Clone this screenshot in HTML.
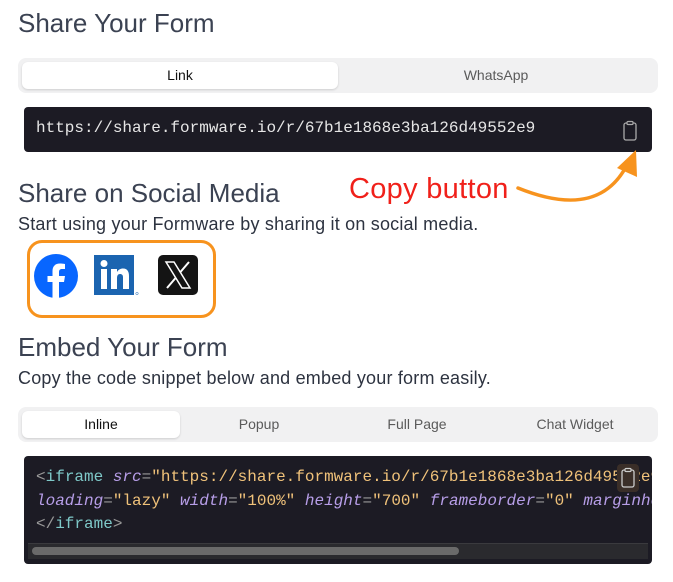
<!DOCTYPE html>
<html><head><style>
*{margin:0;padding:0;box-sizing:border-box}
body{width:673px;height:582px;background:#fff;font-family:"Liberation Sans",sans-serif;position:relative;overflow:hidden;color:#1f2937}
.abs{position:absolute}
h1{position:absolute;font-weight:300;font-size:26px;color:#3b4252;letter-spacing:0;white-space:nowrap}
.sub{position:absolute;font-size:18px;color:#2d3340;white-space:nowrap;letter-spacing:0.2px}
.tabs{position:absolute;left:18px;width:640px;height:35px;background:#f1f1f2;border-radius:8px}
.tab{position:absolute;top:4px;height:27px;line-height:27px;text-align:center;font-size:14px;color:#5a5a5a}
.tab.on{background:#fff;border-radius:6px;box-shadow:0 1px 2px rgba(0,0,0,.15);color:#111}
.dark{position:absolute;left:24px;width:628px;background:#1c1b24;border-radius:4px;font-family:"Liberation Mono",monospace;font-size:16px;color:#e6e6e6;overflow:hidden}
.k{color:#7ec8c8}.a{color:#b79ee8;font-style:italic}.s{color:#f0c27a}.p{color:#999}
</style></head><body>
<h1 style="left:18px;top:8px">Share Your Form</h1>
<div class="tabs" style="top:58px">
<div class="tab on" style="left:4px;width:316px">Link</div>
<div class="tab" style="left:320px;width:316px">WhatsApp</div>
</div>
<div class="dark" style="top:107px;height:45px">
<div class="abs" style="left:12px;top:12px;white-space:nowrap">https://share.formware.io/r/67b1e1868e3ba126d49552e9</div>
<svg class="abs" style="left:598px;top:13px" width="16" height="22" viewBox="0 0 16 22"><rect x="2" y="3" width="12" height="17" rx="2" fill="none" stroke="#aaa" stroke-width="1.3"/><rect x="5" y="1.5" width="6" height="3" rx="1" fill="#1c1b24" stroke="#aaa" stroke-width="1.2"/></svg>
</div>
<div class="abs" style="left:349px;top:173px;font-size:29px;color:#f0201a;white-space:nowrap;letter-spacing:0.3px">Copy button</div>
<svg class="abs" style="left:0;top:0" width="673" height="582"><path d="M518 188 C560 205 605 210 628 163" fill="none" stroke="#f7931e" stroke-width="3.5" stroke-linecap="round"/><path d="M617 168 L636 150 L637 177 Z" fill="#f7931e"/></svg>
<h1 style="left:18px;top:178px">Share on Social Media</h1>
<div class="sub" style="left:18px;top:214px">Start using your Formware by sharing it on social media.</div>
<div class="abs" style="left:27px;top:240px;width:189px;height:78px;border:3px solid #f7931e;border-radius:15px"></div>
<svg class="abs" style="left:34px;top:254px" width="44" height="44" viewBox="0 0 44 44"><circle cx="22" cy="22" r="22" fill="#0866ff"/><path d="M25 44 V28 H30 L31 22 H25 V18 C25 16 26 15 28 15 H31 V10 C29 9.6 27 9.5 26 9.5 C21 9.5 18.5 12.5 18.5 17 V22 H13.5 V28 H18.5 V44 Z" fill="#fff"/></svg>
<svg class="abs" style="left:94px;top:255px" width="46" height="42" viewBox="0 0 46 42"><rect width="40" height="40" fill="#1b64b0"/><rect x="7" y="14" width="6" height="20" fill="#fff"/><circle cx="10" cy="8.5" r="3.5" fill="#fff"/><path d="M17 14 H23 V17 C24.5 14.5 26.5 13.5 29 13.5 C33 13.5 35 16 35 21 V34 H29 V22.5 C29 20 28 19 26 19 C24 19 23 20.5 23 23 V34 H17 Z" fill="#fff"/><circle cx="43" cy="38.5" r="1.2" fill="none" stroke="#1b64b0" stroke-width=".5"/></svg>
<svg class="abs" style="left:158px;top:255px" width="40" height="40" viewBox="0 0 40 40"><rect width="40" height="40" rx="5" fill="#141414"/><path d="M8 7 H16 L32 33 H24 Z" fill="none" stroke="#fff" stroke-width="1.5"/><path d="M31 7 L22 17.5 M18 22.5 L9 33" stroke="#fff" stroke-width="2"/></svg>
<h1 style="left:18px;top:332px">Embed Your Form</h1>
<div class="sub" style="left:18px;top:368px">Copy the code snippet below and embed your form easily.</div>
<div class="tabs" style="top:407px">
<div class="tab on" style="left:4px;width:158px">Inline</div>
<div class="tab" style="left:162px;width:158px">Popup</div>
<div class="tab" style="left:320px;width:158px">Full Page</div>
<div class="tab" style="left:478px;width:158px">Chat Widget</div>
</div>
<div class="dark" style="top:456px;height:108px;line-height:23.5px">
<div class="abs" style="left:12px;top:10px;white-space:nowrap"><span class="p">&lt;</span><span class="k">iframe</span> <span class="a">src</span><span class="p">=</span><span class="s">"https://share.formware.io/r/67b1e1868e3ba126d49552e9"</span></div>
<div class="abs" style="left:12px;top:33.5px;white-space:nowrap"><span class="a">loading</span><span class="p">=</span><span class="s">"lazy"</span> <span class="a">width</span><span class="p">=</span><span class="s">"100%"</span> <span class="a">height</span><span class="p">=</span><span class="s">"700"</span> <span class="a">frameborder</span><span class="p">=</span><span class="s">"0"</span> <span class="a">marginheight</span></div>
<div class="abs" style="left:12px;top:57px;white-space:nowrap"><span class="p">&lt;/</span><span class="k">iframe</span><span class="p">&gt;</span></div>
<div class="abs" style="left:593px;top:8px;width:22px;height:28px;background:#3a2e28;border-radius:4px"></div>
<svg class="abs" style="left:596px;top:11px" width="16" height="22" viewBox="0 0 16 22"><rect x="2" y="3" width="12" height="17" rx="2" fill="none" stroke="#ccc" stroke-width="1.3"/><rect x="5" y="1.5" width="6" height="3" rx="1" fill="#3a2e28" stroke="#ccc" stroke-width="1.2"/></svg>
<div class="abs" style="left:4px;top:87px;width:620px;height:16px;background:#2a2a2e;border-top:1px solid #3a3a3e"></div>
<div class="abs" style="left:8px;top:91px;width:427px;height:8px;background:#6a6a6a;border-radius:4px"></div>
</div>
</body></html>
